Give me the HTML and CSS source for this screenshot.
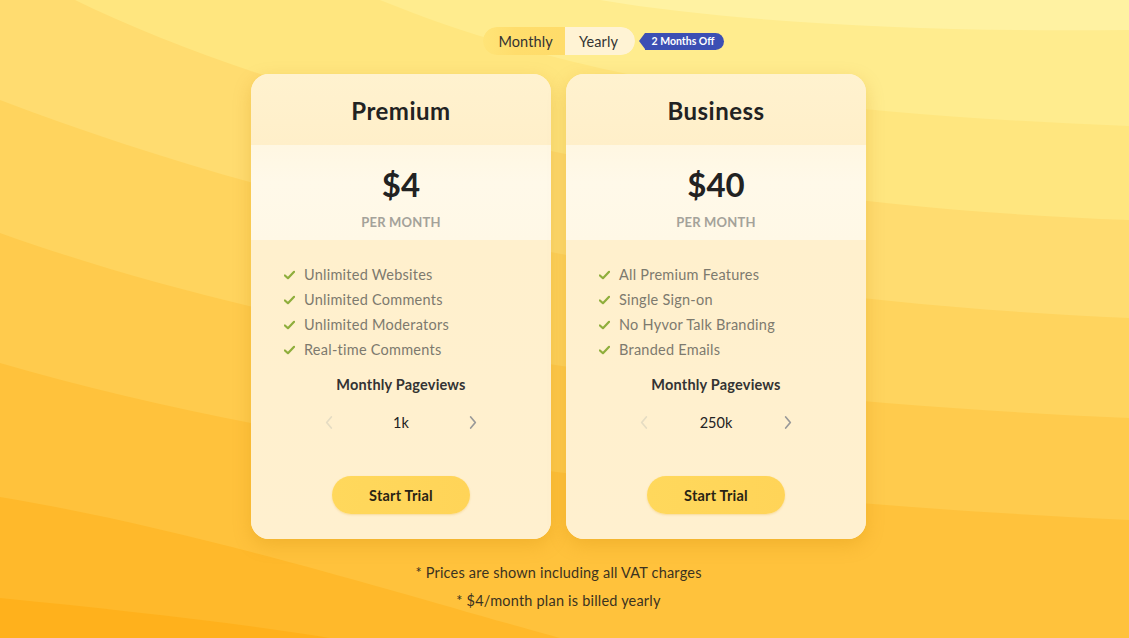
FILE: index.html
```html
<!DOCTYPE html>
<html>
<head>
<meta charset="utf-8">
<link rel="stylesheet" href="styles.css">
</head>
<body>
<svg class="bg" viewBox="0 0 1129 638" preserveAspectRatio="none">
  <rect width="1129" height="638" fill="#fff2a2"/>
  <path d="M600 0 C750 25 950 32 1129 30 V638 H0 V0Z" fill="#ffec8e"/>
  <path d="M380 0 C600 90 850 115 1129 126 V638 H0 V0Z" fill="#ffe67f"/>
  <path d="M75 0 C300 110 700 205 1129 220 V638 H0 V0Z" fill="#ffdc70"/>
  <path d="M0 100 C300 215 700 300 1129 318 V638 H0Z" fill="#ffd45e"/>
  <path d="M0 233 C300 340 700 400 1129 418 V638 H0Z" fill="#ffcb4d"/>
  <path d="M0 363 C300 450 700 500 1129 520 V638 H0Z" fill="#ffc23c"/>
  <path d="M0 497 C200 530 420 600 560 638 H0Z" fill="#ffb92b"/>
  <path d="M0 598 C120 610 230 622 330 638 H0Z" fill="#ffb11c"/>
</svg>
<main class="page">
  <div class="toggle-row">
    <div class="toggle">
      <span class="opt opt-month">Monthly</span>
      <span class="opt opt-year">Yearly</span>
    </div>
    <span class="badge">2 Months Off</span>
  </div>

  <div class="cards">
    <section class="card">
      <div class="card-head">Premium</div>
      <div class="card-price">
        <div class="amount">$4</div>
        <div class="per">PER MONTH</div>
      </div>
      <div class="card-body">
        <ul class="features">
          <li><svg class="check" viewBox="0 0 12 10"><path d="M1 5.5 L4.3 8.5 L11 1.5" /></svg>Unlimited Websites</li>
          <li><svg class="check" viewBox="0 0 12 10"><path d="M1 5.5 L4.3 8.5 L11 1.5" /></svg>Unlimited Comments</li>
          <li><svg class="check" viewBox="0 0 12 10"><path d="M1 5.5 L4.3 8.5 L11 1.5" /></svg>Unlimited Moderators</li>
          <li><svg class="check" viewBox="0 0 12 10"><path d="M1 5.5 L4.3 8.5 L11 1.5" /></svg>Real-time Comments</li>
        </ul>
        <div class="pv-title">Monthly Pageviews</div>
        <div class="pv-select">
          <svg class="chev chev-off" viewBox="0 0 8 14"><path d="M6.5 1 L1.5 7 L6.5 13"/></svg>
          <span class="pv-val">1k</span>
          <svg class="chev" viewBox="0 0 8 14"><path d="M1.5 1 L6.5 7 L1.5 13"/></svg>
        </div>
        <button class="trial">Start Trial</button>
      </div>
    </section>

    <section class="card">
      <div class="card-head">Business</div>
      <div class="card-price">
        <div class="amount">$40</div>
        <div class="per">PER MONTH</div>
      </div>
      <div class="card-body">
        <ul class="features">
          <li><svg class="check" viewBox="0 0 12 10"><path d="M1 5.5 L4.3 8.5 L11 1.5" /></svg>All Premium Features</li>
          <li><svg class="check" viewBox="0 0 12 10"><path d="M1 5.5 L4.3 8.5 L11 1.5" /></svg>Single Sign-on</li>
          <li><svg class="check" viewBox="0 0 12 10"><path d="M1 5.5 L4.3 8.5 L11 1.5" /></svg>No Hyvor Talk Branding</li>
          <li><svg class="check" viewBox="0 0 12 10"><path d="M1 5.5 L4.3 8.5 L11 1.5" /></svg>Branded Emails</li>
        </ul>
        <div class="pv-title">Monthly Pageviews</div>
        <div class="pv-select">
          <svg class="chev chev-off" viewBox="0 0 8 14"><path d="M6.5 1 L1.5 7 L6.5 13"/></svg>
          <span class="pv-val">250k</span>
          <svg class="chev" viewBox="0 0 8 14"><path d="M1.5 1 L6.5 7 L1.5 13"/></svg>
        </div>
        <button class="trial">Start Trial</button>
      </div>
    </section>
  </div>

  <p class="note">* Prices are shown including all VAT charges</p>
  <p class="note">* $4/month plan is billed yearly</p>
</main>
</body>
</html>
```
FILE: styles.css
```css
* { box-sizing: border-box; }
html, body { margin: 0; padding: 0; }
body {
  width: 1129px;
  height: 638px;
  overflow: hidden;
  position: relative;
  font-family: "Lato", "Noto Sans", sans-serif;
  color: #222;
}
.bg {
  position: absolute;
  left: 0; top: 0;
  width: 1129px; height: 638px;
  z-index: 0;
}
.page {
  position: relative;
  z-index: 1;
  display: flex;
  flex-direction: column;
  align-items: center;
  padding-top: 27px;
  padding-right: 12px;
}
.toggle-row {
  display: flex;
  align-items: center;
  margin-left: 90px;
  height: 28px;
}
.toggle {
  display: flex;
  height: 28px;
  border-radius: 14px;
  overflow: hidden;
}
.opt {
  display: flex;
  align-items: center;
  justify-content: center;
  font-size: 14.5px;
  color: #333;
  letter-spacing: 0.1px;
}
.opt-month {
  width: 82px;
  padding-left: 4px;
  background: linear-gradient(90deg, #ffe478, #ffdd6c 40%, #ffdc6a);
  border-radius: 14px 0 0 14px;
}
.opt-year {
  width: 70px;
  background: #fff3d4;
  border-radius: 0 14px 14px 0;
  padding-right: 2px;
}
.badge {
  position: relative;
  margin-left: 10px;
  height: 17px;
  padding: 0 10px 0 7px;
  background: #3c4fb4;
  color: #fff;
  font-size: 10.5px;
  font-weight: 700;
  border-radius: 0 9px 9px 0;
  display: flex;
  align-items: center;
}
.badge::before {
  content: "";
  position: absolute;
  left: -6px;
  top: 0;
  border-top: 8.5px solid transparent;
  border-bottom: 8.5px solid transparent;
  border-right: 6px solid #3c4fb4;
}
.cards {
  display: flex;
  gap: 15px;
  margin-top: 19px;
}
.card {
  width: 300px;
  height: 465px;
  border-radius: 18px;
  overflow: hidden;
  background: #fff0cd;
  box-shadow: 0 6px 18px rgba(200, 130, 0, 0.25);
  display: flex;
  flex-direction: column;
}
.card-head {
  height: 71px;
  display: flex;
  align-items: center;
  justify-content: center;
  font-size: 24px;
  font-weight: 700;
  letter-spacing: 0.5px;
  color: #222;
  background: linear-gradient(180deg, #fff2cf 0%, #ffefc9 100%);
  padding-top: 2px;
}
.card-price {
  height: 95px;
  background: linear-gradient(180deg, #fff7e2 0%, #fff9e9 40%, #fff8e6 100%);
  display: flex;
  flex-direction: column;
  align-items: center;
  padding-top: 19px;
}
.amount {
  font-size: 33px;
  font-weight: 700;
  line-height: 40px;
  color: #222;
}
.per {
  margin-top: 10px;
  font-size: 13px;
  font-weight: 700;
  color: #a4a29a;
  letter-spacing: 0.2px;
}
.card-body {
  flex: 1;
  display: flex;
  flex-direction: column;
  align-items: center;
  padding-top: 22px;
  background: linear-gradient(180deg, #fff0cd 0%, #fff0cf 100%);
}
.features {
  list-style: none;
  margin: 0;
  padding: 0 0 0 33px;
  align-self: stretch;
}
.features li {
  height: 25px;
  display: flex;
  align-items: center;
  font-size: 14.5px;
  letter-spacing: 0.25px;
  color: #7d7a6e;
}
.check {
  width: 11px;
  height: 10px;
  margin-right: 9px;
  fill: none;
  stroke: #8fae3c;
  stroke-width: 2.4;
  stroke-linecap: round;
  stroke-linejoin: round;
}
.pv-title {
  margin-top: 13px;
  font-size: 14.5px;
  font-weight: 700;
  letter-spacing: 0.2px;
  color: #333;
  height: 20px;
  line-height: 20px;
}
.pv-select {
  margin-top: 17px;
  display: flex;
  align-items: center;
  height: 20px;
}
.pv-val {
  width: 136px;
  text-align: center;
  font-size: 14.5px;
  color: #222;
}
.chev {
  width: 8px;
  height: 13px;
  fill: none;
  stroke: #999;
  stroke-width: 1.8;
  stroke-linecap: round;
  stroke-linejoin: round;
}
.chev-off { stroke: #e5dcc3; }
.trial {
  margin-top: 44px;
  width: 138px;
  height: 38px;
  border: 0;
  border-radius: 19px;
  background: linear-gradient(90deg, #ffd85c, #ffd458);
  font-family: inherit;
  font-size: 14.5px;
  font-weight: 700;
  letter-spacing: 0.2px;
  color: #2a2414;
  box-shadow: 0 1px 2px rgba(230, 170, 40, 0.3);
}
.note {
  margin: 0;
  font-size: 14.5px;
  letter-spacing: 0.2px;
  color: #3b3220;
  line-height: 28px;
}
.note:first-of-type { margin-top: 20px; }
```
